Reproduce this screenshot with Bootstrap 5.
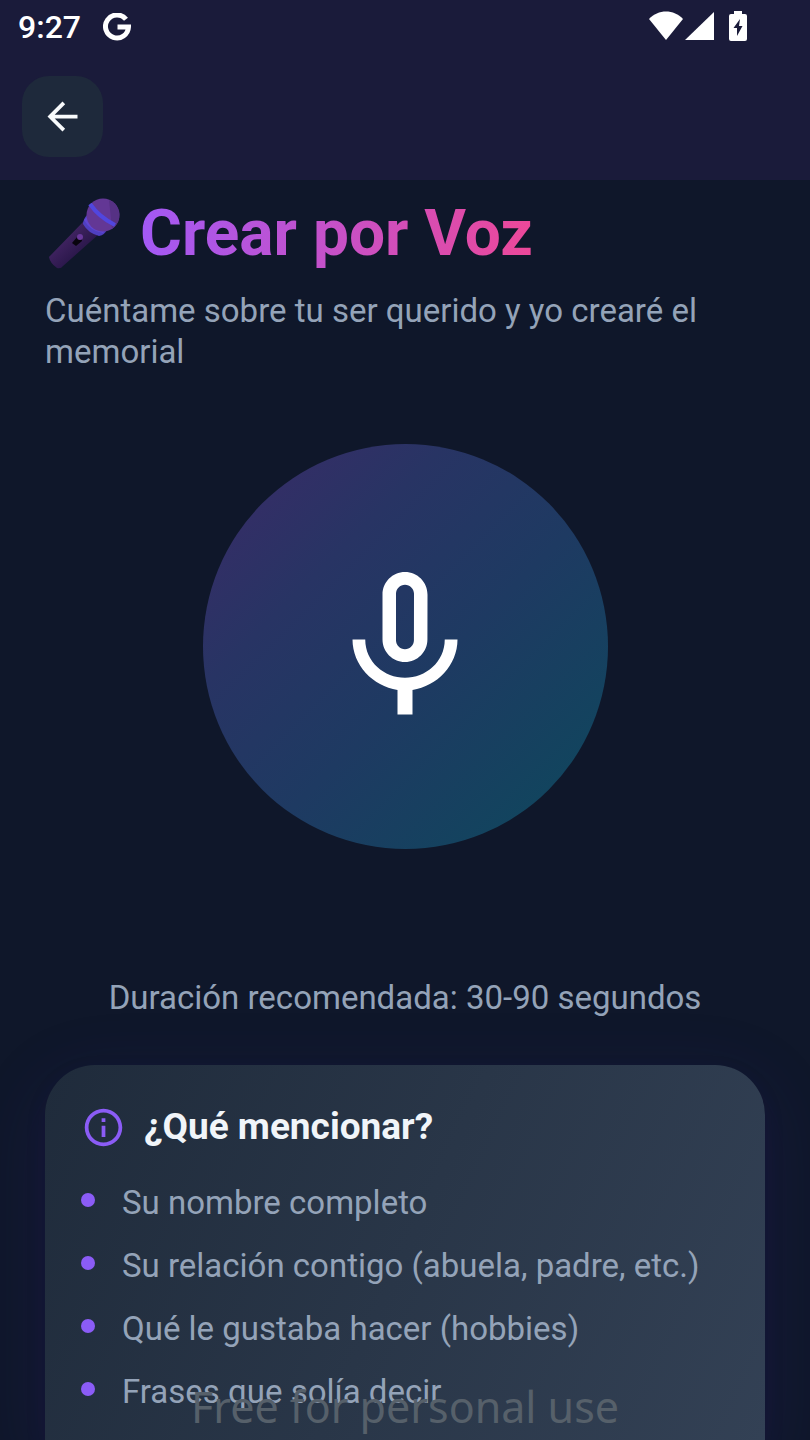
<!DOCTYPE html>
<html lang="es">
<head>
<meta charset="utf-8">
<meta name="viewport" content="width=device-width, initial-scale=1">
<title>Crear por Voz</title>
<link href="https://cdn.jsdelivr.net/npm/bootstrap@5.3.0/dist/css/bootstrap.min.css" rel="stylesheet">
<style>
  body { background: #0f172a; color: #94a3b8; font-family: Roboto, "Noto Sans", sans-serif; font-size: 33px; line-height: 41px; }
  .app-header { background: #1a1b3a; }
  .status-bar { height: 54px; padding: 0 62px 0 18px; color: #fff; font-size: 32px; font-weight: 500; }
  .clock { gap: 22px; }
  .toolbar { padding: 22px 22px 23px; }
  .back-btn { width: 81px; height: 81px; border-radius: 27px; background: #1e293b; color: #f8fafc; }
  .back-btn:hover, .back-btn:active { background: #263449 !important; color: #fff !important; }
  .page-main { padding: 16px 45px 0; }
  .page-title { font-size: 64px; line-height: 76px; font-weight: 700; gap: 18px; }
  .page-title span { background: linear-gradient(90deg, #a259f5, #ec4899); -webkit-background-clip: text; background-clip: text; color: transparent; }
  .subtitle { margin: 18px 0 72px; }
  .record-btn { width: 405px; height: 405px; background: linear-gradient(135deg, #3b2a68 0%, #283464 30%, #1e3a62 56%, #11455e 88%); }
  .duration { margin: 128px 0 47px; }
  .tips-card { border: 0; border-radius: 50px 50px 0 0; padding: 36px 36px 0; background: linear-gradient(115deg, #1f2b3b, #334155); color: inherit; box-shadow: 0 20px 70px 10px rgba(68, 40, 160, .12), 0 8px 20px rgba(32, 16, 96, .12); }
  .tips-title { color: #f1f5f9; font-size: 37px; line-height: 52px; font-weight: 700; gap: 18px; margin-bottom: 29px; }
  .tips-list { display: grid; gap: 22px; }
  .tips-list li { display: flex; gap: 27px; }
  .tips-list li::before { content: ""; flex: none; width: 14px; height: 14px; margin-top: 11px; border-radius: 50%; background: #8b5cf6; }
  .watermark { color: #56606a; font: 43px/58px "Noto Sans", sans-serif; bottom: 4px; }
</style>
</head>
<body>
<div class="vh-100 d-flex flex-column position-relative overflow-hidden">
  <header class="app-header">
    <div class="status-bar d-flex align-items-center justify-content-between">
      <div class="clock d-flex align-items-center">
        <span>9:27</span>
        <svg width="28" height="28" viewBox="0 0 28 28" fill="none" stroke="#fff" stroke-width="5" aria-label="Google"><path d="M23 6.3A11.5 11.5 0 1 0 25.5 14H14.5"/></svg>
      </div>
      <svg width="99" height="32" viewBox="0 0 99 32" fill="#fff" aria-hidden="true">
        <path d="M0 8C9-2 25-2 34 8L17 29z"/>
        <path d="M65 1v28H36z"/>
        <path fill-rule="evenodd" d="M85 0h8v3h3q2 0 2 2v23q0 2-2 2H82q-2 0-2-2V5q0-2 2-2h3zM91 8l-6.500 9h3.500v8l5.500-10h-3.500z"/>
      </svg>
    </div>
    <nav class="toolbar d-flex" aria-label="Navegación">
      <button type="button" class="back-btn btn border-0 p-0 d-flex align-items-center justify-content-center" aria-label="Volver">
        <svg width="45" height="45" viewBox="0 0 24 24" fill="currentColor"><path d="M20 11H7.830l5.590-5.590L12 4l-8 8 8 8 1.410-1.410L7.830 13H20z"/></svg>
      </button>
    </nav>
  </header>

  <main class="page-main flex-grow-1 d-flex flex-column">
    <h1 class="page-title d-flex align-items-center mb-0">
      <svg width="77" height="76" viewBox="0 0 77 76" aria-hidden="true">
        <defs><linearGradient id="handle" x1="0" y1="0" x2="1" y2="1"><stop offset=".3" stop-color="#422463"/><stop offset=".65" stop-color="#2a174a"/></linearGradient></defs>
        <path fill="url(#handle)" d="M38 26 4 61q1 6 8 11 4 1 6-2L54 38z"/>
        <path fill="#4f3fc0" d="M43 18q-5 5-5 10 5 9 16 12 6-1 8-7z"/>
        <path fill="#6045d2" d="M39 24q6 11 19 13l3-4-16-15z"/>
        <circle cx="58" cy="19" r="16.500" fill="#633795"/>
        <path fill="#563184" d="M64 4a16.500 16.500 0 0 1 3 29z"/>
        <path fill="none" stroke="#5146df" stroke-width="4" d="M45 8q9 13 25 21"/>
        <path fill="#08040d" d="m27 47 6-7q4 1 4 5l-6 5z"/>
        <circle cx="35" cy="41" r="3" fill="#69389b"/>
      </svg>
      <span>Crear por Voz</span>
    </h1>
    <p class="subtitle">Cuéntame sobre tu ser querido y yo crearé el memorial</p>

    <button type="button" class="record-btn btn border-0 rounded-circle p-0 align-self-center flex-shrink-0" aria-label="Grabar">
      <svg width="180" height="180" viewBox="0 0 24 24" fill="#fff"><path d="M12 14c1.66 0 2.99-1.34 2.99-3L15 5c0-1.66-1.34-3-3-3S9 3.34 9 5v6c0 1.66 1.34 3 3 3zm-1.2-9.1c0-.66.54-1.2 1.2-1.2s1.2.54 1.2 1.2l-.01 6.2c0 .66-.53 1.2-1.19 1.2s-1.2-.54-1.2-1.2zm6.5 6.1c0 3-2.54 5.1-5.3 5.1S6.7 14 6.7 11H5c0 3.41 2.72 6.23 6 6.72V21h2v-3.28c3.28-.48 6-3.3 6-6.72z"/></svg>
    </button>

    <p class="duration text-center">Duración recomendada: 30-90 segundos</p>

    <section class="tips-card card flex-grow-1">
      <h2 class="tips-title d-flex align-items-center">
        <svg width="45" height="45" viewBox="0 0 24 24" fill="#8b5cf6" aria-hidden="true"><path d="M11 7h2v2h-2zm0 4h2v6h-2zm1-9C6.48 2 2 6.48 2 12s4.48 10 10 10 10-4.48 10-10S17.52 2 12 2zm0 18c-4.41 0-8-3.59-8-8s3.59-8 8-8 8 3.59 8 8-3.59 8-8 8z"/></svg>
        ¿Qué mencionar?
      </h2>
      <ul class="tips-list list-unstyled mb-0">
        <li>Su nombre completo</li>
        <li>Su relación contigo (abuela, padre, etc.)</li>
        <li>Qué le gustaba hacer (hobbies)</li>
        <li>Frases que solía decir</li>
      </ul>
    </section>
  </main>
  <div class="watermark position-absolute start-0 end-0 text-center pe-none">Free for personal use</div>
</div>
<script src="https://cdn.jsdelivr.net/npm/bootstrap@5.3.0/dist/js/bootstrap.bundle.min.js"></script>
</body>
</html>
